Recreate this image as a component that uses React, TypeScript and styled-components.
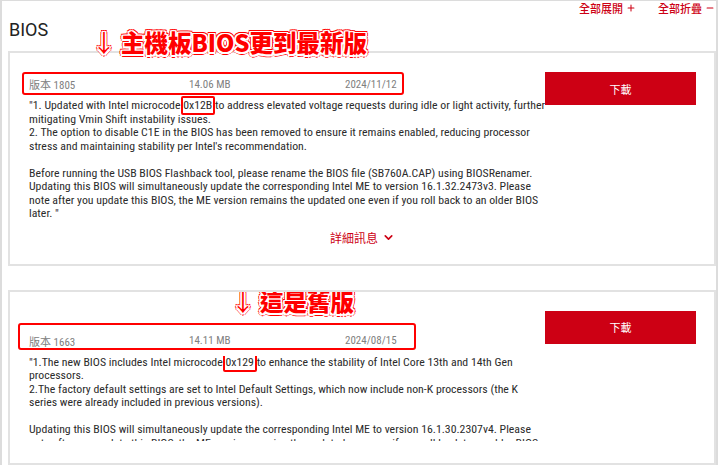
import React from "react";
import styled, { createGlobalStyle } from "styled-components";
import { ChevronDown, Plus, Minus } from "lucide-react";

const Global = createGlobalStyle`
  html, body { margin: 0; padding: 0; background: #fff; }
  body { font-family: "Roboto Condensed", Roboto, "Noto Sans CJK TC", sans-serif; }
`;

const RED = "#cd0014";
const CJK = `"Roboto Condensed", "Noto Sans CJK TC", sans-serif`;

const Frame = styled.div`
  box-sizing: border-box;
  width: 718px;
  height: 465px;
  overflow: hidden;
  border: 2px solid #dcdcdc;
  border-bottom: none;
  border-top-width: 1px;
  padding-left: 6px;
`;

const Toolbar = styled.div`
  display: flex;
  justify-content: flex-end;
  gap: 22px;
  height: 14px;
  padding-right: 1px;
`;

const ToolLink = styled.a`
  display: flex;
  align-items: center;
  gap: 3px;
  font-family: "Noto Sans CJK TC", sans-serif;
  font-size: 11px;
  font-weight: 500;
  line-height: 14px;
  color: ${RED};
  text-decoration: none;
  cursor: pointer;
`;

const Heading = styled.h2`
  margin: 3px 0 9px 1px;
  font-family: Roboto, sans-serif;
  font-weight: 400;
  font-size: 18px;
  line-height: 24px;
  color: #222;
`;

const List = styled.div`
  display: flex;
  flex-direction: column;
  gap: 24px;
`;

const Card = styled.section<{ $height?: number }>`
  position: relative;
  box-sizing: border-box;
  border: 2px solid #e2e2e2;
  padding: 19px 18px 19px 19px;
  display: grid;
  grid-template-columns: 1fr 151px;
  column-gap: 20px;
  ${(p) => (p.$height ? `height: ${p.$height}px; overflow: hidden;` : "")}
`;

const Main = styled.div<{ $offset: number }>`
  min-width: 0;
  padding-top: ${(p) => p.$offset}px;
`;

const MetaRow = styled.div`
  position: relative;
  display: inline-grid;
  grid-template-columns: 160px 156px auto;
  height: 24px;
  align-items: center;
  font-family: ${CJK};
  font-size: 11px;
  color: #808080;
  white-space: nowrap;
`;

const Outline = styled.span<{ $t: number; $r: number; $b: number; $l: number }>`
  position: absolute;
  top: ${(p) => p.$t}px;
  right: ${(p) => p.$r}px;
  bottom: ${(p) => p.$b}px;
  left: ${(p) => p.$l}px;
  border: 2px solid #f00;
  border-radius: 3px;
  pointer-events: none;
`;

const Desc = styled.div<{ $max?: number }>`
  margin-top: 3px;
  font-family: "Roboto Condensed", sans-serif;
  font-size: 11.8px;
  line-height: 13.5px;
  color: #2b2b2b;
  white-space: nowrap;
  ${(p) => (p.$max ? `max-height: ${p.$max}px; overflow-x: visible; overflow-y: clip;` : "")}
`;

const Line = styled.div`
  min-height: 13.5px;
`;

const Mark = styled.span`
  position: relative;
  &::after {
    content: "";
    position: absolute;
    top: -2px;
    bottom: -3px;
    left: -2px;
    right: -3px;
    border: 2px solid #f00;
    border-radius: 2px;
  }
`;

const DownloadButton = styled.button`
  align-self: start;
  height: 33px;
  border: none;
  background: ${RED};
  color: #fff;
  font-family: "Noto Sans CJK TC", sans-serif;
  font-size: 11px;
  cursor: pointer;
  padding: 0;
`;

const MoreRow = styled.div`
  grid-column: 1 / -1;
  display: flex;
  justify-content: center;
  margin-top: 10px;
`;

const MoreLink = styled.a`
  display: flex;
  align-items: center;
  gap: 4px;
  height: 14px;
  font-family: "Noto Sans CJK TC", sans-serif;
  font-size: 12px;
  color: ${RED};
  cursor: pointer;
`;

const Note = styled.div<{ $top: number; $left: number }>`
  position: absolute;
  top: ${(p) => p.$top}px;
  left: ${(p) => p.$left}px;
  display: flex;
  align-items: center;
  gap: 5px;
  font-family: "Noto Sans CJK TC", sans-serif;
  font-weight: 900;
  font-size: 23.5px;
  line-height: 24px;
  color: #f00;
  white-space: nowrap;
  text-shadow:
    1.5px 0 0 #fff, -1.5px 0 0 #fff, 0 1.5px 0 #fff, 0 -1.5px 0 #fff,
    1.5px 1.5px 0 #fff, -1.5px -1.5px 0 #fff, 1.5px -1.5px 0 #fff, -1.5px 1.5px 0 #fff,
    2.5px 0 0 #f00, -2.5px 0 0 #f00, 0 2.5px 0 #f00, 0 -2.5px 0 #f00,
    2px 2px 0 #f00, -2px -2px 0 #f00, 2px -2px 0 #f00, -2px 2px 0 #f00;
`;

const Arrow = styled.span`
  font-weight: 400;
  font-size: 24px;
`;

type Release = {
  version: string;
  size: string;
  date: string;
  lines: React.ReactNode[];
  note: string;
  noteTop: number;
  noteLeft: number;
  metaOffset: number;
  outline: { t: number; r: number; b: number; l: number };
  clip?: number;
  height?: number;
  more: boolean;
};

const releases: Release[] = [
  {
    version: "1805",
    size: "14.06 MB",
    date: "2024/11/12",
    note: "主機板BIOS更到最新版",
    noteTop: -23,
    noteLeft: 82,
    metaOffset: 0,
    outline: { t: 0, r: -7, b: 1, l: -7 },
    more: true,
    lines: [
      <>
        "1. Updated with Intel microcode <Mark>0x12B</Mark> to address elevated voltage requests during idle or light activity, further
      </>,
      "mitigating Vmin Shift instability issues.",
      "2. The option to disable C1E in the BIOS has been removed to ensure it remains enabled, reducing processor",
      "stress and maintaining stability per Intel's recommendation.",
      "",
      "Before running the USB BIOS Flashback tool, please rename the BIOS file (SB760A.CAP) using BIOSRenamer.",
      "Updating this BIOS will simultaneously update the corresponding Intel ME to version 16.1.32.2473v3. Please",
      "note after you update this BIOS, the ME version remains the updated one even if you roll back to an older BIOS",
      'later. "',
    ],
  },
  {
    version: "1663",
    size: "14.11 MB",
    date: "2024/08/15",
    note: "這是舊版",
    noteTop: -3,
    noteLeft: 221,
    metaOffset: 18,
    outline: { t: -6, r: -19, b: 3, l: -11 },
    clip: 85,
    height: 175,
    more: false,
    lines: [
      <>
        "1.The new BIOS includes Intel microcode <Mark>0x129</Mark> to enhance the stability of Intel Core 13th and 14th Gen
      </>,
      "processors.",
      "2.The factory default settings are set to Intel Default Settings, which now include non-K processors (the K",
      "series were already included in previous versions).",
      "",
      "Updating this BIOS will simultaneously update the corresponding Intel ME to version 16.1.30.2307v4. Please",
      "note after you update this BIOS, the ME version remains the updated one even if you roll back to an older BIOS",
      'later. "',
    ],
  },
];

export default function App() {
  return (
    <>
      <Global />
      <Frame>
        <Toolbar>
          <ToolLink>
            全部展開 <Plus size={10} strokeWidth={2.5} />
          </ToolLink>
          <ToolLink>
            全部折疊 <Minus size={10} strokeWidth={2.5} />
          </ToolLink>
        </Toolbar>
        <Heading>BIOS</Heading>
        <List>
          {releases.map((r) => (
            <Card key={r.version} $height={r.height}>
              <Main $offset={r.metaOffset}>
                <MetaRow>
                  <span>版本 {r.version}</span>
                  <span>{r.size}</span>
                  <span>{r.date}</span>
                  <Outline $t={r.outline.t} $r={r.outline.r} $b={r.outline.b} $l={r.outline.l} />
                </MetaRow>
                <Desc $max={r.clip}>
                  {r.lines.map((l, i) => (
                    <Line key={i}>{l}</Line>
                  ))}
                </Desc>
              </Main>
              <DownloadButton>下載</DownloadButton>
              {r.more && (
                <MoreRow>
                  <MoreLink>
                    詳細訊息 <ChevronDown size={13} strokeWidth={3} />
                  </MoreLink>
                </MoreRow>
              )}
              <Note $top={r.noteTop} $left={r.noteLeft}>
                <Arrow>↓</Arrow>
                {r.note}
              </Note>
            </Card>
          ))}
        </List>
      </Frame>
    </>
  );
}
